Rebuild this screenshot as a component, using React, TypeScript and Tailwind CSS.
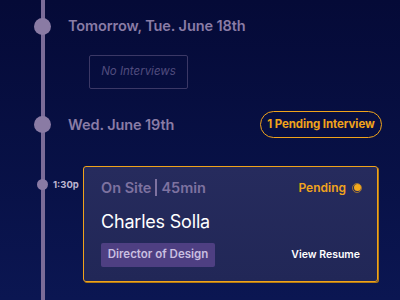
const font = { fontFamily: "Inter, 'Noto Sans', sans-serif" };

const App = () => {
  return (
    <div
      className="relative h-[300px] w-[400px] overflow-hidden bg-gradient-to-b from-[#050a37] to-[#0b1652]"
      style={font}
    >
      {/* timeline rail */}
      <div className="absolute left-[41px] top-0 bottom-0 w-[4px] bg-[#7b6c98]" />

      <div className="relative flex flex-col pt-[17px]">
        <div className="flex h-[18px] items-center">
          <span className="ml-[34px] h-[17px] w-[17px] rounded-full bg-[#8a7ba4]" />
          <h3 className="ml-[17px] text-[14.5px] font-semibold tracking-[-0.1px] text-[#8a7ca6]">
            Tomorrow, Tue. June 18th
          </h3>
        </div>

        <div className="ml-[89px] mt-[20px] flex h-[34px] w-[99px] items-center justify-center rounded-[2px] border border-[#3b3866]">
          <span className="text-[11.5px] italic text-[#514c7e]">No Interviews</span>
        </div>

        <div className="mt-[22px] flex h-[27px] items-center">
          <span className="ml-[34px] h-[17px] w-[17px] rounded-full bg-[#8a7ba4]" />
          <h3 className="ml-[17px] text-[14.5px] font-semibold tracking-[-0.1px] text-[#8a7ca6]">
            Wed. June 19th
          </h3>
          <button className="ml-auto mr-[18px] flex h-[27px] w-[122px] items-center justify-center rounded-full border-[1.5px] border-[#f0a31b]">
            <span className="text-[11.5px] font-bold tracking-[-0.1px] text-[#f0a31b]">1 Pending Interview</span>
          </button>
        </div>

        <div className="mt-[28px] flex">
          <div className="flex w-[83px] items-start pt-[13px]">
            <span className="ml-[37px] h-[11px] w-[11px] rounded-full bg-[#8a7ba4]" />
            <span className="ml-[5px] text-[9.5px] font-bold leading-[11px] text-[#bdb5d0]">1:30p</span>
          </div>
          <div className="flex h-[116px] w-[295px] flex-col rounded-[3px] border-[1.5px] border-[#f0a31b] bg-gradient-to-b from-[#262b5d] to-[#212757] px-[17px] pt-[10px] shadow-[1px_1px_0_#b37a12]">
            <div className="flex items-center">
              <span className="text-[14.5px] font-semibold text-[#7e72a0]">On Site</span>
              <span className="mx-[4px] h-[17px] w-[2px] bg-[#7e72a0]" />
              <span className="text-[14.5px] font-semibold text-[#7e72a0]">45min</span>
              <span className="ml-auto text-[12px] font-semibold text-[#f0a31b]">Pending</span>
              <span className="ml-[6px] mr-[-2px] flex h-[10px] w-[10px] items-center justify-center rounded-full border border-[#f0a31b]/60">
                <span className="h-[7px] w-[7px] rounded-full bg-[#f5a91c]" />
              </span>
            </div>
            <div className="mt-[11px] text-[18px] leading-[24px] tracking-[-0.2px] text-white">Charles Solla</div>
            <div className="mt-[9px] flex items-center">
              <span className="flex h-[24px] w-[114px] items-center justify-center rounded-[2px] bg-[#4e3f82] text-[11.5px] font-semibold text-[#c9bfe0]">
                Director of Design
              </span>
              <span className="ml-auto text-[10.5px] font-semibold text-white">View Resume</span>
            </div>
          </div>
        </div>
      </div>
    </div>
  );
};

export default App;
